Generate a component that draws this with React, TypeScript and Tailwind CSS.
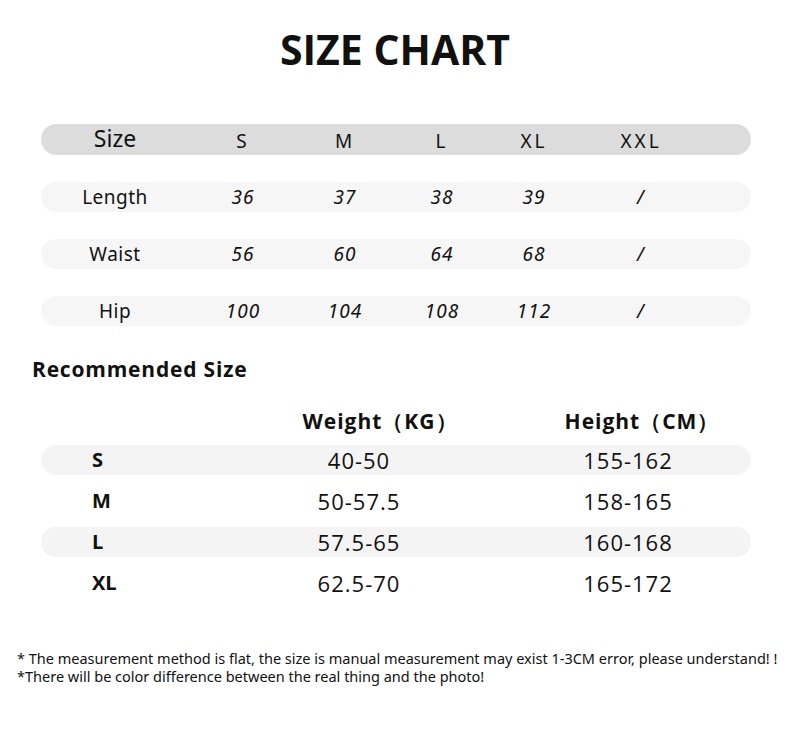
import React from "react";

const cols = ["S", "M", "L", "XL", "XXL"];
const colW = ["w-[108px]", "w-[96px]", "w-[98px]", "w-[86px]", "w-[128px]"];

const rows = [
    { name: "Length", vals: ["36", "37", "38", "39", "/"] },
    { name: "Waist", vals: ["56", "60", "64", "68", "/"] },
    { name: "Hip", vals: ["100", "104", "108", "112", "/"] },
];

const rec = [
    { size: "S", weight: "40-50", height: "155-162", bar: true },
    { size: "M", weight: "50-57.5", height: "158-165", bar: false },
    { size: "L", weight: "57.5-65", height: "160-168", bar: true },
    { size: "XL", weight: "62.5-70", height: "165-172", bar: false },
];

export default function App() {
    return (
        <div className="w-[790px] h-[735px] bg-white text-[#111] font-['Open_Sans',sans-serif] overflow-hidden">
            <h1 className="pt-[23px] text-center text-[41px] leading-[52px] font-bold">SIZE CHART</h1>

            <div className="mt-[49px] ml-[41px] w-[710px] space-y-[27px]">
                <div className="flex items-center h-[31px] rounded-full bg-[#dcdcdc] font-['Noto_Sans',sans-serif]">
                    <div className="w-[148px] text-center text-[23px] -mt-[3px]">Size</div>
                    {cols.map((c, i) => (
                        <div key={c} className={`${colW[i]} text-center text-[19px] tracking-[3px] mt-[3px]`}>{c}</div>
                    ))}
                </div>
                {rows.map((r) => (
                    <div key={r.name} className="flex items-center h-[30px] rounded-full bg-[#f6f6f6] font-['Noto_Sans',sans-serif]">
                        <div className="w-[148px] text-center text-[19px] tracking-[0.5px]">{r.name}</div>
                        {r.vals.map((v, i) => (
                            <div key={i} className={`${colW[i]} text-center text-[19px] tracking-[1px] italic`}>{v}</div>
                        ))}
                    </div>
                ))}
            </div>

            <h2 className="mt-[28px] ml-[32px] text-[21px] font-bold leading-[30px] tracking-[0.8px]">Recommended Size</h2>

            <div className="mt-[22px] flex font-bold text-[21px] leading-[30px] tracking-[1px] whitespace-nowrap">
                <div className="w-[290px] shrink-0" />
                <div className="w-[180px] shrink-0 text-center">Weight（KG）</div>
                <div className="w-[82px] shrink-0" />
                <div className="w-[180px] shrink-0 text-center">Height（CM）</div>
            </div>

            <div className="mt-[9px] ml-[41px] w-[710px] space-y-[11px]">
                {rec.map((r) => (
                    <div key={r.size} className={`flex items-center h-[30px] rounded-full whitespace-nowrap ${r.bar ? "bg-[#f4f4f4]" : ""}`}>
                        <div className="w-[198px] shrink-0 pl-[51px] text-[20px] font-bold">{r.size}</div>
                        <div className="w-[240px] shrink-0 text-center text-[22px] tracking-[1px]">{r.weight}</div>
                        <div className="w-[272px] shrink-0 text-center text-[22px] tracking-[1px]">
                            <span className="inline-block w-[298px] text-center">{r.height}</span>
                        </div>
                    </div>
                ))}
            </div>

            <div className="mt-[51px] ml-[17px] text-[14.5px] leading-[18px] font-['Noto_Sans',sans-serif]">
                <p>* The measurement method is flat, the size is manual measurement may exist 1-3CM error, please understand! !</p>
                <p>*There will be color difference between the real thing and the photo!</p>
            </div>
        </div>
    );
}
